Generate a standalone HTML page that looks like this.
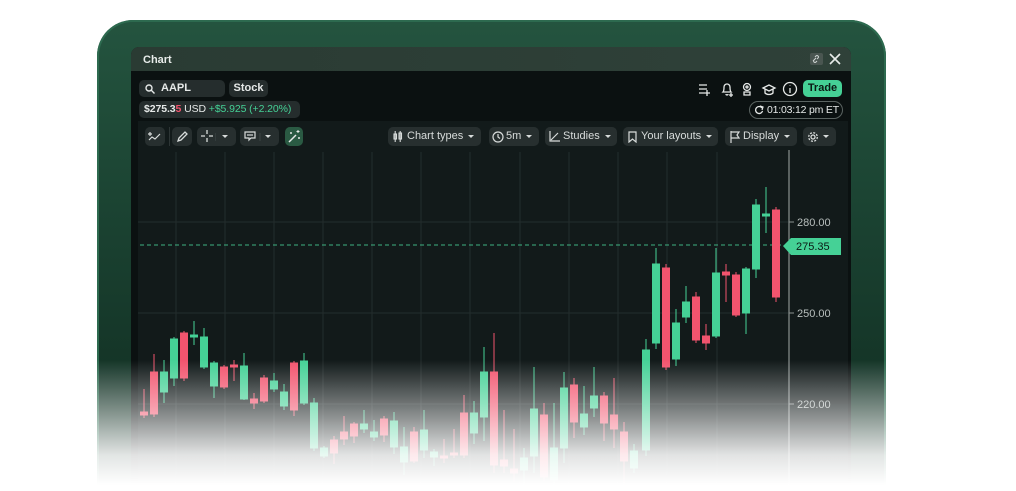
<!DOCTYPE html>
<html><head><meta charset="utf-8"><style>
*{margin:0;padding:0;box-sizing:border-box}
html,body{width:1016px;height:491px;overflow:hidden}
body{background:#fff;position:relative;font-family:"Liberation Sans",sans-serif}
.frame{position:absolute;left:97px;top:20px;width:789px;height:471px;border-radius:36px 36px 0 0;background:linear-gradient(180deg,#24543f 0%,#1b4332 40%,#0f2a1f 100%);box-shadow:inset 0 0 0 2px #2d6a4f}
.panel{position:absolute;left:131px;top:47px;width:720px;height:444px;border-radius:8px 8px 0 0;background:#0b1111;overflow:hidden}
.hdr{position:absolute;left:0;top:0;width:720px;height:24px;background:linear-gradient(90deg,#2a3b33,#2f4139);color:#e8ecea;font-weight:bold;font-size:11px;padding:7px 12px}
.pill{position:absolute;background:#252d2d;border-radius:5px;color:#e6e9e8;font-size:11px;font-weight:bold;line-height:17px;height:17px;white-space:nowrap}
.chartbg{position:absolute;left:7px;top:74px;width:710px;height:370px;background:#121a1a}
.btn{position:absolute;top:80px;height:19px;background:#272f2f;border-radius:5px;color:#d8dcdb;font-size:11px;line-height:19px;white-space:nowrap}
.caret{display:inline-block;width:0;height:0;border-left:3px solid transparent;border-right:3px solid transparent;border-top:3px solid #d8dcdb;vertical-align:middle;margin-left:5px}
.fade{position:absolute;left:0;top:0;width:1016px;height:491px;background:linear-gradient(180deg,rgba(255,255,255,0) 0px,rgba(255,255,255,0) 360px,rgba(255,255,255,.5) 415px,rgba(255,255,255,.88) 455px,#fff 485px)}
</style></head><body>
<div class="frame"></div>
<div class="panel">
  <div class="hdr">Chart</div>
  <div style="position:absolute;left:679px;top:6px;width:13px;height:12px;background:#4a5651;border-radius:2px"></div>
  <svg style="position:absolute;left:681px;top:8px" width="9" height="8" fill="none" stroke="#cfd6d3" stroke-width="1"><path d="M1 6l3-3M3 2l1-1a1.4 1.4 0 012 2l-1 1M5 6l-1 1a1.4 1.4 0 01-2-2l1-1"/></svg>
  <svg style="position:absolute;left:698px;top:6px" width="12" height="12"><path d="M1 1L11 11M11 1L1 11" stroke="#e8ecea" stroke-width="1.6"/></svg>

  <div class="pill" style="left:8px;top:33px;width:86px;padding-left:22px">AAPL</div>
  <svg style="position:absolute;left:14px;top:37px" width="10" height="10"><circle cx="4" cy="4" r="3" fill="none" stroke="#e6e9e8" stroke-width="1.4"/><path d="M6.3 6.3L9.5 9.5" stroke="#e6e9e8" stroke-width="1.4"/></svg>
  <div class="pill" style="left:98px;top:33px;width:39px;text-align:center">Stock</div>
  <div class="pill" style="left:8px;top:54px;width:161px;padding-left:5px;font-weight:normal;font-size:10.5px;letter-spacing:-0.1px"><b>$275.3</b><b style="color:#f2546e">5</b> USD <span style="color:#45d196">+$5.925 (+2.20%)</span></div>

  <svg style="position:absolute;left:566px;top:34px" width="150" height="16" fill="none" stroke="#e6e9e8" stroke-width="1.3">
    <path d="M2 4h8M2 8h8M2 12h5M10 9v6M7 12h6"/>
    <path d="M26 11c1-1 1-3 1-5a3 3 0 016 0c0 2 0 4 1 5zM29 13a1 1 0 002 0M34 12v4M32 14h4"/>
    <circle cx="50" cy="6" r="3.5"/><circle cx="50" cy="6" r="1"/><path d="M47 11h6v3h-6z"/>
    <path d="M66 7l6-3 6 3-6 3zM68 8v4c2 2 6 2 8 0V8"/>
    <circle cx="93" cy="8" r="6.5"/><path d="M93 7v5M93 4.5v.5"/>
  </svg>
  <div style="position:absolute;left:672px;top:33px;width:39px;height:17px;background:#45d196;border-radius:5px;color:#0b1a14;font-size:11px;font-weight:bold;text-align:center;line-height:17px">Trade</div>
  <div style="position:absolute;left:618px;top:54px;width:94px;height:18px;border:1px solid #5b6462;border-radius:9px;color:#e6e9e8;font-size:10.5px;line-height:16px;padding-left:17px;white-space:nowrap;letter-spacing:-0.2px">01:03:12 pm ET</div>
  <svg style="position:absolute;left:623px;top:58px" width="10" height="10"><path d="M8 3A3.5 3.5 0 1 0 8.5 6" fill="none" stroke="#e6e9e8" stroke-width="1.3"/><path d="M6 1l3 1-1 3" fill="none" stroke="#e6e9e8" stroke-width="1.2"/></svg>

  <div class="chartbg"></div>
  <div class="btn" style="left:14px;width:20px"></div>
  <svg style="position:absolute;left:17px;top:83px" width="14" height="13" fill="none" stroke="#d8dcdb" stroke-width="1.2"><path d="M1 10l3-3 3 2 5-5M2 2v4M0 4h4"/></svg>
  <div style="position:absolute;left:38px;top:80px;width:1px;height:19px;background:#2d3535"></div>
  <div class="btn" style="left:41px;width:20px"></div>
  <svg style="position:absolute;left:45px;top:83px" width="12" height="13" fill="none" stroke="#d8dcdb" stroke-width="1.3"><path d="M2 11l1-3 6-6 2 2-6 6z"/></svg>
  <div class="btn" style="left:66px;width:39px;padding-left:25px"><span class="caret" style="margin-left:0"></span></div>
  <svg style="position:absolute;left:69px;top:83px" width="16" height="13" stroke="#d8dcdb" stroke-width="1.3"><path d="M7 0v4M7 8v4M1 6h4M9 6h4"/><path d="M16 3v8" stroke="#3a4343"/></svg>
  <div class="btn" style="left:109px;width:39px;padding-left:25px"><span class="caret" style="margin-left:0"></span></div>
  <svg style="position:absolute;left:113px;top:84px" width="17" height="12" fill="none" stroke="#d8dcdb" stroke-width="1.2"><path d="M1 1h10v6H7l-2 2V7H1z"/><path d="M3 4h6"/><path d="M16 2v8" stroke="#3a4343"/></svg>
  <div class="btn" style="left:154px;width:18px;background:#2a5a43"></div>
  <svg style="position:absolute;left:156px;top:82px" width="14" height="15" stroke="#e6e9e8" stroke-width="1.5"><path d="M2 13l7-7"/><path d="M11 1v3M9.5 2.5h3M4 3v2M3 4h2M12 8v2M11 9h2" stroke-width="1"/></svg>

  <div class="btn" style="left:257px;width:93px;padding-left:19px">Chart types<span class="caret"></span></div>
  <svg style="position:absolute;left:262px;top:84px" width="10" height="11" stroke="#d8dcdb" fill="none" stroke-width="1.1"><rect x="1" y="3" width="2.5" height="5"/><rect x="6" y="2" width="2.5" height="6"/><path d="M2.2 0v11M7.2 0v11"/></svg>
  <div class="btn" style="left:358px;width:50px;padding-left:17px">5m<span class="caret"></span></div>
  <svg style="position:absolute;left:361px;top:84px" width="12" height="12" fill="none" stroke="#d8dcdb" stroke-width="1.2"><circle cx="6" cy="6" r="5"/><path d="M6 3v3l2 1.5"/></svg>
  <div class="btn" style="left:414px;width:72px;padding-left:18px">Studies<span class="caret"></span></div>
  <svg style="position:absolute;left:418px;top:84px" width="11" height="11" fill="none" stroke="#d8dcdb" stroke-width="1.2"><path d="M1 0v10h10M2 9l7-7"/></svg>
  <div class="btn" style="left:492px;width:95px;padding-left:18px">Your layouts<span class="caret"></span></div>
  <svg style="position:absolute;left:497px;top:84px" width="10" height="12" fill="none" stroke="#d8dcdb" stroke-width="1.2"><path d="M1 1h7v10L4.5 8 1 11z"/></svg>
  <div class="btn" style="left:594px;width:72px;padding-left:18px">Display<span class="caret"></span></div>
  <svg style="position:absolute;left:599px;top:84px" width="11" height="12" fill="none" stroke="#d8dcdb" stroke-width="1.2"><path d="M1 0v12M1 1h8l-2 3 2 3H1"/></svg>
  <div class="btn" style="left:672px;width:33px;padding-left:20px"><span class="caret" style="margin-left:0"></span></div>
  <svg style="position:absolute;left:676px;top:84px" width="12" height="12" fill="none" stroke="#d8dcdb" stroke-width="1.3"><circle cx="6" cy="6" r="2"/><circle cx="6" cy="6" r="4.3" stroke-dasharray="2 1.4"/></svg>
</div>

<svg style="position:absolute;left:0;top:0;display:block" width="1016" height="491" viewBox="0 0 1016 491">
  <g stroke="#232d2d" stroke-width="1">
    <path d="M176 152V491M225 152V491M274 152V491M323 152V491M372 152V491M421 152V491M470 152V491M520 152V491M569 152V491M618 152V491M667 152V491M717 152V491"/>
    <path d="M138 222H789M138 313H789M138 404H789"/>
  </g>
  <path d="M789 150V491" stroke="#8a9190" stroke-width="1.2"/>
  <path d="M140 245H784" stroke="#3fb283" stroke-width="1" stroke-dasharray="4 3"/>
  <g fill="#b8bfbd" font-size="11" font-family="Liberation Sans,sans-serif">
    <path d="M789 222h5M789 313h5M789 404h5" stroke="#8a9190"/>
    <text x="797" y="226">280.00</text><text x="797" y="317">250.00</text><text x="797" y="408">220.00</text>
  </g>
  <path d="M783 246l8-8h50v17h-50z" fill="#45d196"/>
  <text x="796" y="250" font-size="11" fill="#0b1a14" font-family="Liberation Sans,sans-serif">275.35</text>
  <g stroke-width="1">
<g stroke="#f2546e" fill="#f2546e"><path d="M144 389V418M154 354V417M184 331V381M224 365V389M234 360V381M254 393V409M264 375V403M294 361V416M334 436V464M344 416V445M354 422V443M384 416V442M414 427V463M444 439V463M454 429V458M464 395V458M494 333V473M504 410V473M514 429V482M544 403V481M574 378V438M604 392V441M614 378V448M624 422V485M666 264V370M696 292V343M706 324V350M726 264V302M736 272V317M776 207V302"/>
<rect x="140.5" y="412" width="7" height="3"/><rect x="150.5" y="372" width="7" height="42"/><rect x="180.5" y="333" width="7" height="45"/><rect x="220.5" y="367" width="7" height="20"/><rect x="230.5" y="365" width="7" height="2"/><rect x="250.5" y="399" width="7" height="4"/><rect x="260.5" y="378" width="7" height="23"/><rect x="290.5" y="363" width="7" height="47"/><rect x="330.5" y="440" width="7" height="13"/><rect x="340.5" y="432" width="7" height="7"/><rect x="350.5" y="424" width="7" height="12"/><rect x="380.5" y="419" width="7" height="16"/><rect x="410.5" y="432" width="7" height="29"/><rect x="440.5" y="456" width="7" height="2"/><rect x="450.5" y="453" width="7" height="2"/><rect x="460.5" y="413" width="7" height="42"/><rect x="490.5" y="372" width="7" height="93"/><rect x="500.5" y="460" width="7" height="6"/><rect x="510.5" y="469" width="7" height="4"/><rect x="540.5" y="415" width="7" height="62"/><rect x="570.5" y="385" width="7" height="37"/><rect x="600.5" y="396" width="7" height="27"/><rect x="610.5" y="415" width="7" height="14"/><rect x="620.5" y="432" width="7" height="29"/><rect x="662.5" y="268" width="7" height="99"/><rect x="692.5" y="297" width="7" height="43"/><rect x="702.5" y="336" width="7" height="7"/><rect x="722.5" y="272" width="7" height="3"/><rect x="732.5" y="275" width="7" height="40"/><rect x="772.5" y="210" width="7" height="87"/></g>
<g stroke="#45d196" fill="#45d196"><path d="M164 360V403M174 337V386M194 321V345M204 328V369M214 361V398M244 353V400M274 373V392M284 384V410M304 353V405M314 398V451M324 446V458M364 410V433M374 420V441M394 412V454M404 427V475M424 410V458M434 449V466M474 401V444M484 347V441M524 448V488M534 367V473M554 403V490M564 372V463M584 386V435M594 367V417M634 444V473M646 339V456M656 248V349M676 309V366M686 286V323M716 248V338M746 267V334M756 199V278M766 187V233"/>
<rect x="160.5" y="372" width="7" height="20"/><rect x="170.5" y="339" width="7" height="39"/><rect x="190.5" y="335" width="7" height="2"/><rect x="200.5" y="337" width="7" height="30"/><rect x="210.5" y="363" width="7" height="23"/><rect x="240.5" y="366" width="7" height="33"/><rect x="270.5" y="381" width="7" height="8"/><rect x="280.5" y="392" width="7" height="14"/><rect x="300.5" y="361" width="7" height="42"/><rect x="310.5" y="403" width="7" height="45"/><rect x="320.5" y="448" width="7" height="8"/><rect x="360.5" y="424" width="7" height="5"/><rect x="370.5" y="432" width="7" height="5"/><rect x="390.5" y="421" width="7" height="26"/><rect x="400.5" y="447" width="7" height="15"/><rect x="420.5" y="430" width="7" height="20"/><rect x="430.5" y="452" width="7" height="5"/><rect x="470.5" y="413" width="7" height="20"/><rect x="480.5" y="372" width="7" height="45"/><rect x="520.5" y="458" width="7" height="12"/><rect x="530.5" y="409" width="7" height="47"/><rect x="550.5" y="448" width="7" height="32"/><rect x="560.5" y="388" width="7" height="60"/><rect x="580.5" y="414" width="7" height="13"/><rect x="590.5" y="396" width="7" height="12"/><rect x="630.5" y="451" width="7" height="17"/><rect x="642.5" y="350" width="7" height="100"/><rect x="652.5" y="264" width="7" height="79"/><rect x="672.5" y="323" width="7" height="36"/><rect x="682.5" y="302" width="7" height="15"/><rect x="712.5" y="273" width="7" height="63"/><rect x="742.5" y="269" width="7" height="44"/><rect x="752.5" y="205" width="7" height="64"/><rect x="762.5" y="214" width="7" height="2"/></g>
  </g>
</svg>
<div class="fade"></div>
</body></html>
